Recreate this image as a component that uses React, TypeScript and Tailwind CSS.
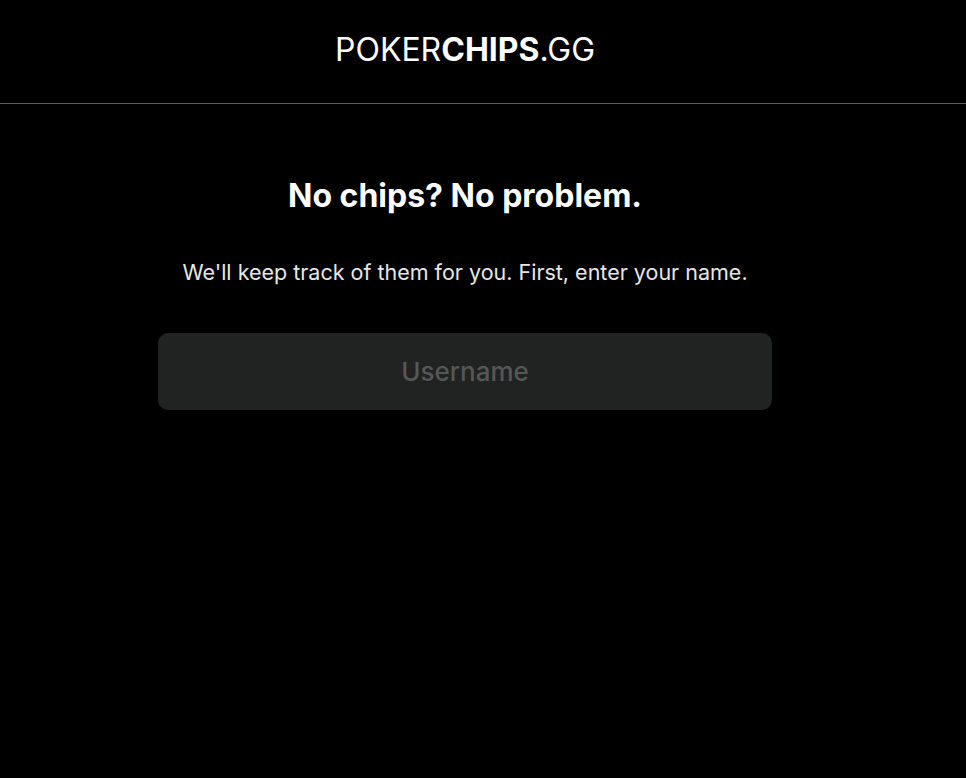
import { useState } from 'react';

export default function App() {
  const [name, setName] = useState('');

  return (
    <div className="min-h-screen bg-black text-white font-['Inter',sans-serif]">
      {/* Header */}
      <header className="h-[104px] border-b border-[#5a5a5a]">
        <div className="w-[930px] h-full flex items-center justify-center">
          <h1 className="text-[32px] leading-[40px] -mt-[3px] text-white">
            POKER<span className="font-bold">CHIPS</span>.GG
          </h1>
        </div>
      </header>

      {/* Main */}
      <main className="w-[930px] flex flex-col items-center pt-[72px]">
        <h2 className="text-[32px] font-bold leading-[40px]">No chips? No problem.</h2>
        <p className="mt-[40px] text-[21.5px] leading-[32px] text-[#e6e6e6]">
          We'll keep track of them for you. First, enter your name.
        </p>
        <input
          value={name}
          onChange={(e) => setName(e.target.value)}
          placeholder="Username"
          className="mt-[45px] w-[614px] h-[77px] rounded-[10px] bg-[#212222] text-center text-[26px] font-medium text-white placeholder:text-[#555757] outline-none"
        />
      </main>
    </div>
  );
}
